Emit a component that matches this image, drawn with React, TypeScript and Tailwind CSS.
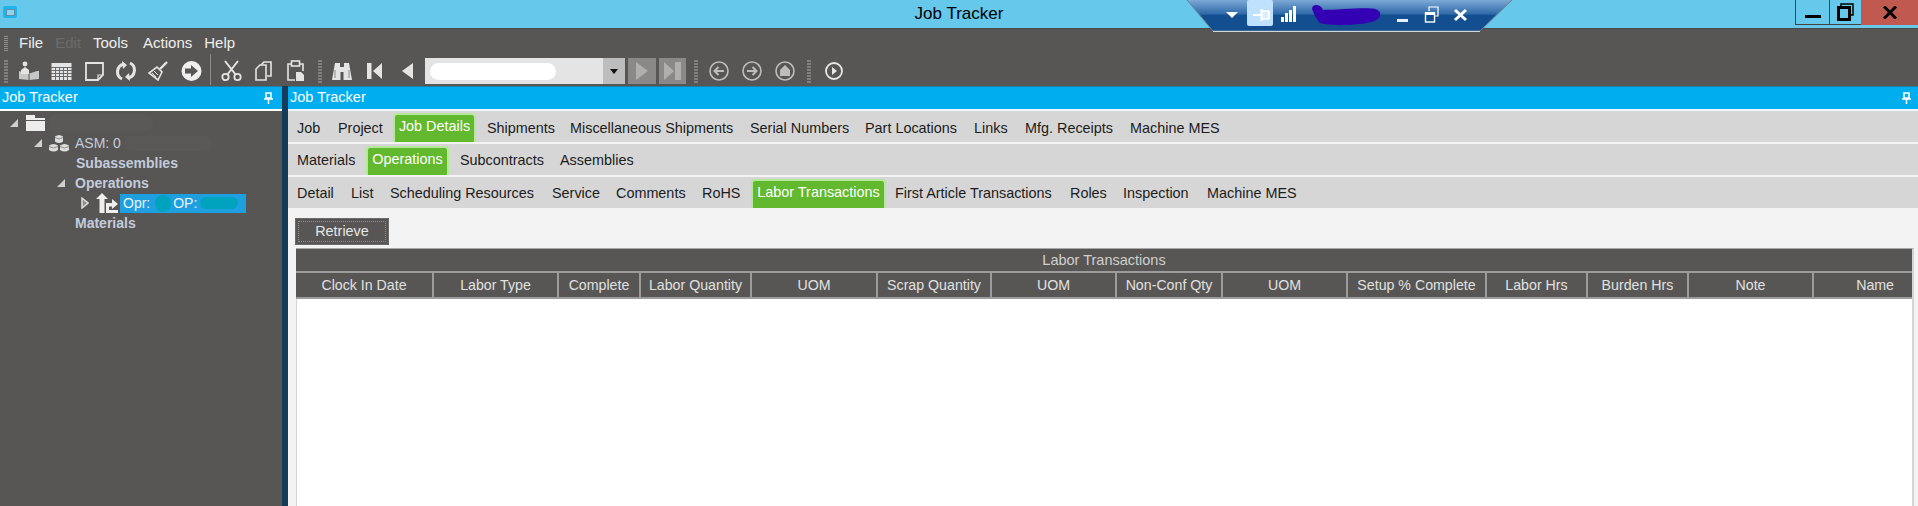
import React from "react";

const font = "font-['Liberation_Sans',Arial,sans-serif]";

function Grip({ className = "" }: { className?: string }) {
  return (
    <div className={"flex flex-col gap-px w-[4px] " + className}>
      {Array.from({ length: 8 }).map((_, i) => (
        <div key={i} className="h-px bg-[#8f8e8c]" />
      ))}
    </div>
  );
}

const ic = "#e4e4e4";

function I({ w, h = 22, ml, children }: { w: number; h?: number; ml: string; children: React.ReactNode }) {
  return (
    <svg width={w} height={h} viewBox={`0 0 ${w} ${h}`} className={"shrink-0 " + ml}>
      {children}
    </svg>
  );
}

function Toolbar() {
  return (
    <div className="flex items-center h-[29px] pb-[1px] relative">
      <Grip className="ml-[4px] mr-0 scale-y-150" />
      {/* job: person over open book */}
      <I w={22} ml="ml-[10px]">
        <circle cx="7" cy="4" r="2.4" fill={ic} />
        <path d="M3 10 L7 7 L11 10 L11 14 L3 14 Z" fill={ic} />
        <path d="M1 19 V11 L10 14 L19 11 H21 V19 L11 20 Z" fill={ic} opacity="0.8" />
        <path d="M11 14 V20" stroke="#575654" />
      </I>
      {/* grid */}
      <I w={21} ml="ml-[11px]">
        <rect x="0.5" y="3" width="20" height="17" fill={ic} />
        <path d="M0 7.5H21M0 10.5H21M0 13.5H21M0 16.5H21M4.5 7V20M8.5 7V20M12.5 7V20M16.5 7V20" stroke="#6a6a6a" strokeWidth="1" />
      </I>
      {/* note */}
      <I w={19} ml="ml-[13px]">
        <path d="M1 3 H18 V15 L13 20 H1 Z" fill="none" stroke={ic} strokeWidth="1.8" />
        <path d="M18 15 L13 15 V20" fill="none" stroke={ic} strokeWidth="1.2" />
      </I>
      {/* refresh */}
      <I w={20} ml="ml-[12px]">
        <path d="M8 4 A8 8 0 0 0 6 19" fill="none" stroke={ic} strokeWidth="3" />
        <path d="M12 18 A8 8 0 0 0 14 3" fill="none" stroke={ic} strokeWidth="3" />
        <path d="M6 1 L11 5 L7 9 Z" fill={ic} />
        <path d="M14 21 L9 17 L13 13 Z" fill={ic} />
      </I>
      {/* broom */}
      <I w={20} ml="ml-[12px]">
        <path d="M12 9 L19 2" stroke={ic} strokeWidth="2.4" />
        <path d="M9 7 L14 12 L10 20 L1 13 Z" fill="none" stroke={ic} strokeWidth="1.6" />
        <path d="M6 11 L10 15 M4 13 L8 17" stroke={ic} strokeWidth="1" />
      </I>
      {/* arrow circle */}
      <I w={21} ml="ml-[13px]">
        <circle cx="10.5" cy="11" r="10" fill="#efefef" />
        <path d="M4 8.5 H10 V5 L17 11 L10 17 V13.5 H4 Z" fill="#575654" />
      </I>
      <div className="w-px h-[31px] bg-[#8d8c8a] ml-[8px] -mt-[3px]" />
      {/* scissors */}
      <I w={21} ml="ml-[10px]">
        <path d="M4 1 L15 15 M17 1 L6 15" stroke={ic} strokeWidth="2" />
        <circle cx="4.5" cy="17" r="3.2" fill="none" stroke={ic} strokeWidth="1.8" />
        <circle cx="16.5" cy="17" r="3.2" fill="none" stroke={ic} strokeWidth="1.8" />
      </I>
      {/* copy */}
      <I w={17} ml="ml-[13px]">
        <path d="M6 5 L9 2 H16 V16 H12" fill="none" stroke={ic} strokeWidth="1.6" />
        <path d="M1 9 L5 5 H11 V20 H1 Z" fill="none" stroke={ic} strokeWidth="1.6" />
      </I>
      {/* clipboard */}
      <I w={18} ml="ml-[15px]">
        <path d="M4 4 H1 V20 H8 M13 4 H16 V11" fill="none" stroke={ic} strokeWidth="1.6" />
        <rect x="4.5" y="1" width="8" height="5" fill="none" stroke={ic} strokeWidth="1.6" />
        <path d="M9 12 H14 L17 15 V21 H9 Z" fill={ic} />
      </I>
      <Grip className="ml-[13px] scale-y-150" />
      {/* binoculars */}
      <I w={20} ml="ml-[10px]">
        <path d="M3 3 H8 V7 H12 V3 H17 L20 20 H11.5 V12 H8.5 V20 H0 Z" fill={ic} />
        <path d="M3 10 V18 M17 10 V18" stroke="#8a8a8a" />
      </I>
      <I w={16} ml="ml-[15px]">
        <rect x="0" y="3" width="4.5" height="16" fill={ic} />
        <path d="M15 3 V19 L6 11 Z" fill={ic} />
      </I>
      <I w={12} ml="ml-[18px]">
        <path d="M12 3 V19 L1 11 Z" fill={ic} />
      </I>
      {/* combo */}
      <div className="ml-[12px] w-[200px] h-[26px] bg-[#e4e4e4] flex items-stretch shrink-0">
        <div className="flex-1 flex items-center pl-[5px]">
          <div className="w-[126px] h-[17px] rounded-full bg-white" />
        </div>
        <div className="w-[22px] bg-[#bdbdbd] flex items-center justify-center">
          <svg width="8" height="5" viewBox="0 0 8 5"><path d="M0 0H8L4 5Z" fill="#111" /></svg>
        </div>
      </div>
      <div className="ml-[3px] w-[28px] h-[26px] bg-[#8a8987] flex items-center justify-center shrink-0">
        <svg width="12" height="18" viewBox="0 0 12 18"><path d="M0 0 L12 9 L0 18Z" fill="#b0afad" /></svg>
      </div>
      <div className="ml-[3px] w-[27px] h-[26px] bg-[#8a8987] flex items-center justify-center shrink-0">
        <svg width="17" height="18" viewBox="0 0 17 18"><path d="M0 0 L10 9 L0 18Z M11 0H17V18H11Z" fill="#b0afad" /></svg>
      </div>
      <Grip className="ml-[8px] scale-y-150" />
      <I w={20} ml="ml-[11px]">
        <circle cx="10" cy="11" r="9" fill="none" stroke="#bdbdbd" strokeWidth="1.6" />
        <path d="M15 11 H6 M9.5 7 L5.5 11 L9.5 15" fill="none" stroke="#bdbdbd" strokeWidth="2" />
      </I>
      <I w={20} ml="ml-[13px]">
        <circle cx="10" cy="11" r="9" fill="none" stroke="#bdbdbd" strokeWidth="1.6" />
        <path d="M5 11 H14 M10.5 7 L14.5 11 L10.5 15" fill="none" stroke="#bdbdbd" strokeWidth="2" />
      </I>
      <I w={20} ml="ml-[13px]">
        <circle cx="10" cy="11" r="9" fill="none" stroke="#bdbdbd" strokeWidth="1.6" />
        <path d="M10 5 L15 10 V16 H5 V10 Z" fill="#bdbdbd" />
      </I>
      <Grip className="ml-[12px] scale-y-150" />
      <I w={18} ml="ml-[14px]">
        <circle cx="9" cy="11" r="8" fill="none" stroke="#e8e8e8" strokeWidth="1.8" />
        <path d="M7 7 L12 11 L7 15 Z" fill="#e8e8e8" />
      </I>
    </div>
  );
}

function ConnectionBar() {
  return (
    <div className="absolute left-[1185px] top-0 w-[328px] h-[33px]">
      <svg width="328" height="33" viewBox="0 0 328 33" className="absolute inset-0">
        <defs>
          <linearGradient id="cb" x1="0" y1="0" x2="0" y2="1">
            <stop offset="0" stopColor="#7da9d6" />
            <stop offset="0.45" stopColor="#2f6aa8" />
            <stop offset="0.5" stopColor="#124e90" />
            <stop offset="1" stopColor="#124e90" />
          </linearGradient>
        </defs>
        <path d="M2 0 H327 L295 31 H28 Z" fill="url(#cb)" />
        <path d="M2 0 L28 31 H295 L327 0" fill="none" stroke="#6c7f8f" strokeWidth="1" />
        <path d="M28 31.5 H295" stroke="#cfd8df" strokeWidth="1" />
        {/* dropdown */}
        <path d="M41 12 H53 L47 18 Z" fill="#fff" />
        {/* pin button */}
        <rect x="62" y="0" width="26" height="26" rx="2" fill="#bfe1fd" />
        <path d="M68 15 H76 M76.5 9 V21 M84 11 V19" stroke="#fff" strokeWidth="2" fill="none" />
        <path d="M76 11 H84 V19 H76 Z" fill="#fff" fillOpacity="0.45" />
        <path d="M76 11 H84 M76 19 H84" stroke="#fff" strokeWidth="1.6" />
        {/* signal */}
        <path d="M96 17 h3 v5 h-3z M100 13 h3 v9 h-3z M104 10 h3 v12 h-3z M108 6 h3 v16 h-3z" fill="#fff" />
        {/* redaction scribble */}
        <path d="M127 9 C127 3 136 4 138 10 C152 10 182 7 190 9 C198 11 197 20 186 22 C170 26 145 26 135 23 C131 19 129 14 127 9 Z" fill="#3300b3" />
        {/* minimize */}
        <rect x="212" y="19" width="11" height="3" fill="#e6f2fb" />
        {/* restore */}
        <path d="M244 11 V7 H253 V16 H250" fill="none" stroke="#fff" strokeWidth="1.2" />
        <rect x="240.5" y="13" width="9" height="9" fill="none" stroke="#fff" strokeWidth="1.4" />
        <rect x="240" y="12" width="10" height="3" fill="#fff" />
        {/* close */}
        <path d="M270 10 L281 20 M281 10 L270 20" stroke="#fff" strokeWidth="3" />
      </svg>
    </div>
  );
}

function WindowButtons() {
  return (
    <div className="absolute right-0 top-0 flex h-[25px]">
      <div className="w-[34px] border-l border-b border-[#444] flex items-end justify-center pb-[6px]">
        <div className="w-[16px] h-[3px] bg-black" />
      </div>
      <div className="w-[32px] border-l border-b border-[#444] flex items-center justify-center">
        <svg width="17" height="18" viewBox="0 0 17 18">
          <path d="M4 3 V1 H16 V12 H13" fill="none" stroke="#000" strokeWidth="1.5" />
          <rect x="1.5" y="4.5" width="11" height="12" fill="none" stroke="#000" strokeWidth="3" />
        </svg>
      </div>
      <div className="w-[57px] bg-[#c05a50] flex items-center justify-center">
        <svg width="14" height="13" viewBox="0 0 14 13"><path d="M1 0.5 L13 12.5 M13 0.5 L1 12.5" stroke="#000" strokeWidth="3" /></svg>
      </div>
    </div>
  );
}

function Pin() {
  return (
    <svg width="9" height="12" viewBox="0 0 9 12" className="shrink-0">
      <path d="M2 1 H7 V6 H2 Z" fill="none" stroke="#fff" strokeWidth="1.5" />
      <path d="M0 7 H9 M4.5 7 V12" stroke="#fff" strokeWidth="1.5" />
    </svg>
  );
}

function PanelBar({ pr }: { pr: string }) {
  return (
    <div className={"h-[23px] bg-[#00adef] flex items-center justify-between pl-[2px] text-[14.5px] text-white border-t border-[#1f7fa8] " + pr}>
      <span>Job Tracker</span>
      <Pin />
    </div>
  );
}

const treeText = "text-[14px] text-[#c3cbdc]";
const treeBold = "text-[14px] font-bold text-[#c3cbdc]";

function TriDown() {
  return (
    <svg width="8" height="8" viewBox="0 0 8 8" className="shrink-0"><path d="M8 0 V8 H0 Z" fill="#d0d0d0" /></svg>
  );
}

function Tree() {
  return (
    <div className="flex-1 bg-[#575654] pt-[2px]">
      <div className="h-[20px] flex items-center pl-[10px]">
        <TriDown />
        <svg width="21" height="17" viewBox="0 0 21 17" className="ml-[7px] shrink-0">
          <path d="M1 0 H10 V3 H20 V5 H1 Z M1 6 H20 L20 16 H1 Z" fill="#ececec" />
        </svg>
        <div className="ml-[2px] w-[105px] h-[18px] rounded-full bg-[#5a5958]" />
      </div>
      <div className="h-[20px] flex items-center pl-[34px]">
        <TriDown />
        <svg width="20" height="19" viewBox="0 0 20 19" className="ml-[7px] shrink-0">
          <g fill="#dddddd">
            <path d="M6 2.5 Q10 -0.5 14 2.5 V7.5 Q10 10.5 6 7.5 Z" />
            <path d="M0 11.5 Q4.5 8.5 9 11.5 V16 Q4.5 19 0 16 Z" />
            <path d="M11 11.5 Q15.5 8.5 20 11.5 V16 Q15.5 19 11 16 Z" />
          </g>
          <path d="M6 3.5 Q10 6.5 14 3.5 M0 12.5 Q4.5 15.5 9 12.5 M11 12.5 Q15.5 15.5 20 12.5" fill="none" stroke="#777" strokeWidth="0.8" />
        </svg>
        <span className={"ml-[6px] " + treeText}>ASM: 0</span>
        <div className="ml-[3px] w-[88px] h-[15px] rounded-full bg-[#5a5958]" />
      </div>
      <div className={"h-[20px] flex items-center pl-[76px] " + treeBold}>Subassemblies</div>
      <div className="h-[20px] flex items-center pl-[57px]">
        <TriDown />
        <span className={"ml-[10px] " + treeBold}>Operations</span>
      </div>
      <div className="h-[20px] flex items-center pl-[81px]">
        <svg width="8" height="12" viewBox="0 0 8 12" className="shrink-0">
          <path d="M1 1 L7 6 L1 11 Z" fill="#8f8e8c" stroke="#dcdcdc" strokeWidth="1.5" />
        </svg>
        <svg width="22" height="20" viewBox="0 0 22 20" className="ml-[7px] shrink-0">
          <path d="M6 0 L12 6 H8.5 V20 H3.5 V6 H0 Z" fill="#eeeeee" />
          <path d="M10 10 H16 V6 L22 11 L16 16 V13.5 H13 V17 H22 V20 H10 Z" fill="#eeeeee" />
        </svg>
        <div className="ml-[2px] w-[126px] h-[19px] bg-[#1d9fe0] flex items-center pl-[3px] text-[14px] text-[#eef4fb]">
          <span>Opr:</span>
          <div className="ml-[5px] w-[16px] h-[17px] rounded-full bg-[#00a3bd]" />
          <span className="ml-[2px]">OP:</span>
          <div className="ml-[3px] w-[38px] h-[12px] rounded-full bg-[#00a3bd]" />
        </div>
      </div>
      <div className={"h-[20px] flex items-center pl-[75px] " + treeBold}>Materials</div>
    </div>
  );
}

type T = { label: string; cls: string; active?: boolean };

const row1: T[] = [
  { label: "Job", cls: "w-[41px]" },
  { label: "Project", cls: "w-[55px]" },
  { label: "Job Details", cls: "w-[83px]", active: true },
  { label: "Shipments", cls: "ml-[11px] w-[83px]" },
  { label: "Miscellaneous Shipments", cls: "w-[180px]" },
  { label: "Serial Numbers", cls: "w-[115px]" },
  { label: "Part Locations", cls: "w-[109px]" },
  { label: "Links", cls: "w-[51px]" },
  { label: "Mfg. Receipts", cls: "w-[105px]" },
  { label: "Machine MES", cls: "w-[100px]" },
];
const row2: T[] = [
  { label: "Materials", cls: "w-[69px]" },
  { label: "Operations", cls: "w-[83px]", active: true },
  { label: "Subcontracts", cls: "ml-[11px] w-[100px]" },
  { label: "Assemblies", cls: "w-[90px]" },
];
const row3: T[] = [
  { label: "Detail", cls: "w-[54px]" },
  { label: "List", cls: "w-[39px]" },
  { label: "Scheduling Resources", cls: "w-[162px]" },
  { label: "Service", cls: "w-[64px]" },
  { label: "Comments", cls: "w-[86px]" },
  { label: "RoHS", cls: "w-[49px]" },
  { label: "Labor Transactions", cls: "w-[135px]", active: true },
  { label: "First Article Transactions", cls: "ml-[9px] w-[175px]" },
  { label: "Roles", cls: "w-[53px]" },
  { label: "Inspection", cls: "w-[84px]" },
  { label: "Machine MES", cls: "w-[100px]" },
];

function TabRow({ tabs, pad }: { tabs: T[]; pad: string }) {
  return (
    <div className="h-[31px] bg-[#d6d6d6] flex items-end pl-[9px] text-[14.4px] text-[#1c1c1c] mb-[1px]">
      {tabs.map((t) =>
        t.active ? (
          <div
            key={t.label}
            className={"h-[29px] bg-[#63b92d] text-white rounded-t-[4px] border-2 border-b-0 border-[#b4e89a] flex items-start justify-center pt-[1px] shrink-0 whitespace-nowrap " + t.cls}
          >
            {t.label}
          </div>
        ) : (
          <div key={t.label} className={"h-[30px] flex items-center whitespace-nowrap shrink-0 " + pad + " " + t.cls}>
            {t.label}
          </div>
        )
      )}
    </div>
  );
}

const cols = [
  "Clock In Date",
  "Labor Type",
  "Complete",
  "Labor Quantity",
  "UOM",
  "Scrap Quantity",
  "UOM",
  "Non-Conf Qty",
  "UOM",
  "Setup % Complete",
  "Labor Hrs",
  "Burden Hrs",
  "Note",
  "Name",
];

function Table() {
  return (
    <div className="ml-[8px] mr-[4px] mt-[3px] flex-1 flex flex-col border-r-2 border-[#d4d4d4] border-t border-t-[#a8a8a8]">
      <div className="h-[24px] pt-[2px] bg-[#575654] flex items-center justify-center text-[14.5px] text-[#cfcfcf] border-b-2 border-[#9c9c9c] shrink-0">
        Labor Transactions
      </div>
      <div className="h-[26px] shrink-0 bg-[#575654] border-b-2 border-[#9c9c9c] grid grid-cols-[138px_125px_82px_111px_126px_114px_125px_106px_125px_139px_101px_101px_125px_1fr] text-[14.2px] text-[#e0e0e0]">
        {cols.map((c, i) => (
          <div
            key={i}
            className={
              i === 13
                ? "flex items-center justify-end pr-[18px] pt-[2px] whitespace-nowrap"
                : "flex items-center justify-center pt-[2px] border-r-2 border-[#9c9c9c] whitespace-nowrap"
            }
          >
            {c}
          </div>
        ))}
      </div>
      <div className="flex-1 bg-white border-l border-[#d4d4d4]" />
    </div>
  );
}

export default function App() {
  return (
    <div className={"w-[1918px] h-[506px] overflow-hidden flex flex-col bg-[#575654] relative " + font}>
      <div className="h-[29px] bg-[#66c8ea] flex items-center justify-center relative shrink-0 border-b border-[#4a4a4a]">
        <div className="absolute left-[3px] top-[6px] w-[14px] h-[12px] rounded-[2px] bg-[#1fb4ea] flex items-center justify-center">
          <div className="w-[9px] h-[7px] bg-[#8fd3ee] border border-[#5b8ea8]" />
        </div>
        <span className="text-[17px] text-black">Job Tracker</span>
        <WindowButtons />
      </div>
      <ConnectionBar />
      <div className="h-[28px] flex items-center shrink-0 text-[15px] text-[#eeeeee]">
        <Grip className="ml-[4px]" />
        <span className="ml-[11px]">File</span>
        <span className="ml-[12px] text-[#6c6b6a]">Edit</span>
        <span className="ml-[12px]">Tools</span>
        <span className="ml-[15px]">Actions</span>
        <span className="ml-[12px]">Help</span>
      </div>
      <Toolbar />
      <div className="flex-1 flex min-h-0">
        <div className="w-[282px] flex flex-col shrink-0">
          <PanelBar pr="pr-[9px]" />
          <div className="h-[2px] bg-white" />
          <Tree />
        </div>
        <div className="w-[6px] bg-[#123c5a] shrink-0" />
        <div className="flex-1 flex flex-col bg-[#f3f3f3] min-w-0">
          <PanelBar pr="pr-[7px]" />
          <div className="h-[2px] bg-[#eef7fb]" />
          <TabRow tabs={row1} pad="pt-[3px]" />
          <div className="h-px bg-[#f3f3f3]" />
          <TabRow tabs={row2} pad="pt-[2px]" />
          <div className="h-px bg-[#f3f3f3]" />
          <TabRow tabs={row3} pad="pt-[2px]" />
          <div className="mt-[9px] ml-[7px] w-[94px] h-[27px] bg-[#575654] border border-[#6a6a6a] p-[2px] text-[14.4px] text-[#e6e6e6] shrink-0">
            <div className="w-full h-full border border-dotted border-[#8f8e8c] flex items-center justify-center">Retrieve</div>
          </div>
          <Table />
        </div>
      </div>
    </div>
  );
}
